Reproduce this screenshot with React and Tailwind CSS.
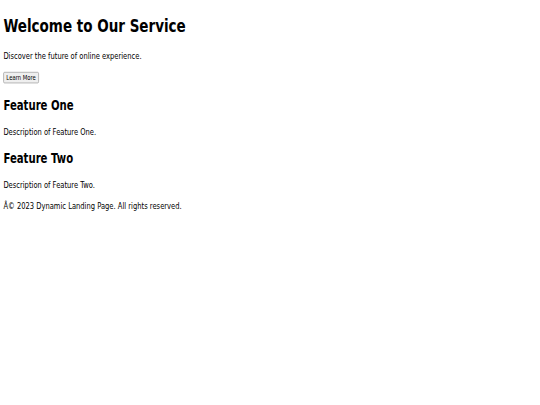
export default function App() {
  return (
    <div className="w-[540px] h-[405px] overflow-hidden bg-white">
      {/* page laid out at 1280x720, then squeezed into the 540x405 frame */}
      <div className="w-[1280px] h-[720px] origin-top-left scale-x-[0.421875] scale-y-[0.5625] px-2 text-black font-['DejaVu_Sans',sans-serif]">
        <header className="flex flex-col items-start">
          <h1 className="mt-[27.5px] text-[32px] leading-[37.25px] font-bold">Welcome to Our Service</h1>
          <p className="mt-[25px] text-[16px] leading-[18.62px]">Discover the future of online experience.</p>
          <button className="mt-[20px] h-[19.5px] px-[6px] text-[12.5px] leading-[15px] bg-[#efefef] border border-[#767676] rounded-[3px] font-['DejaVu_Sans',sans-serif]">
            Learn More
          </button>
        </header>
        <section className="flex flex-col">
          <div className="flex flex-col">
            <h2 className="mt-[26px] text-[24px] leading-[27.94px] font-bold">Feature One</h2>
            <p className="mt-[24px] text-[16px] leading-[18.62px]">Description of Feature One.</p>
          </div>
          <div className="flex flex-col">
            <h2 className="mt-[24.5px] text-[24px] leading-[27.94px] font-bold">Feature Two</h2>
            <p className="mt-[23.5px] text-[16px] leading-[18.62px]">Description of Feature Two.</p>
          </div>
        </section>
        <footer>
          <p className="mt-[17.5px] text-[16px] leading-[18.62px]">Â© 2023 Dynamic Landing Page. All rights reserved.</p>
        </footer>
      </div>
    </div>
  );
}
